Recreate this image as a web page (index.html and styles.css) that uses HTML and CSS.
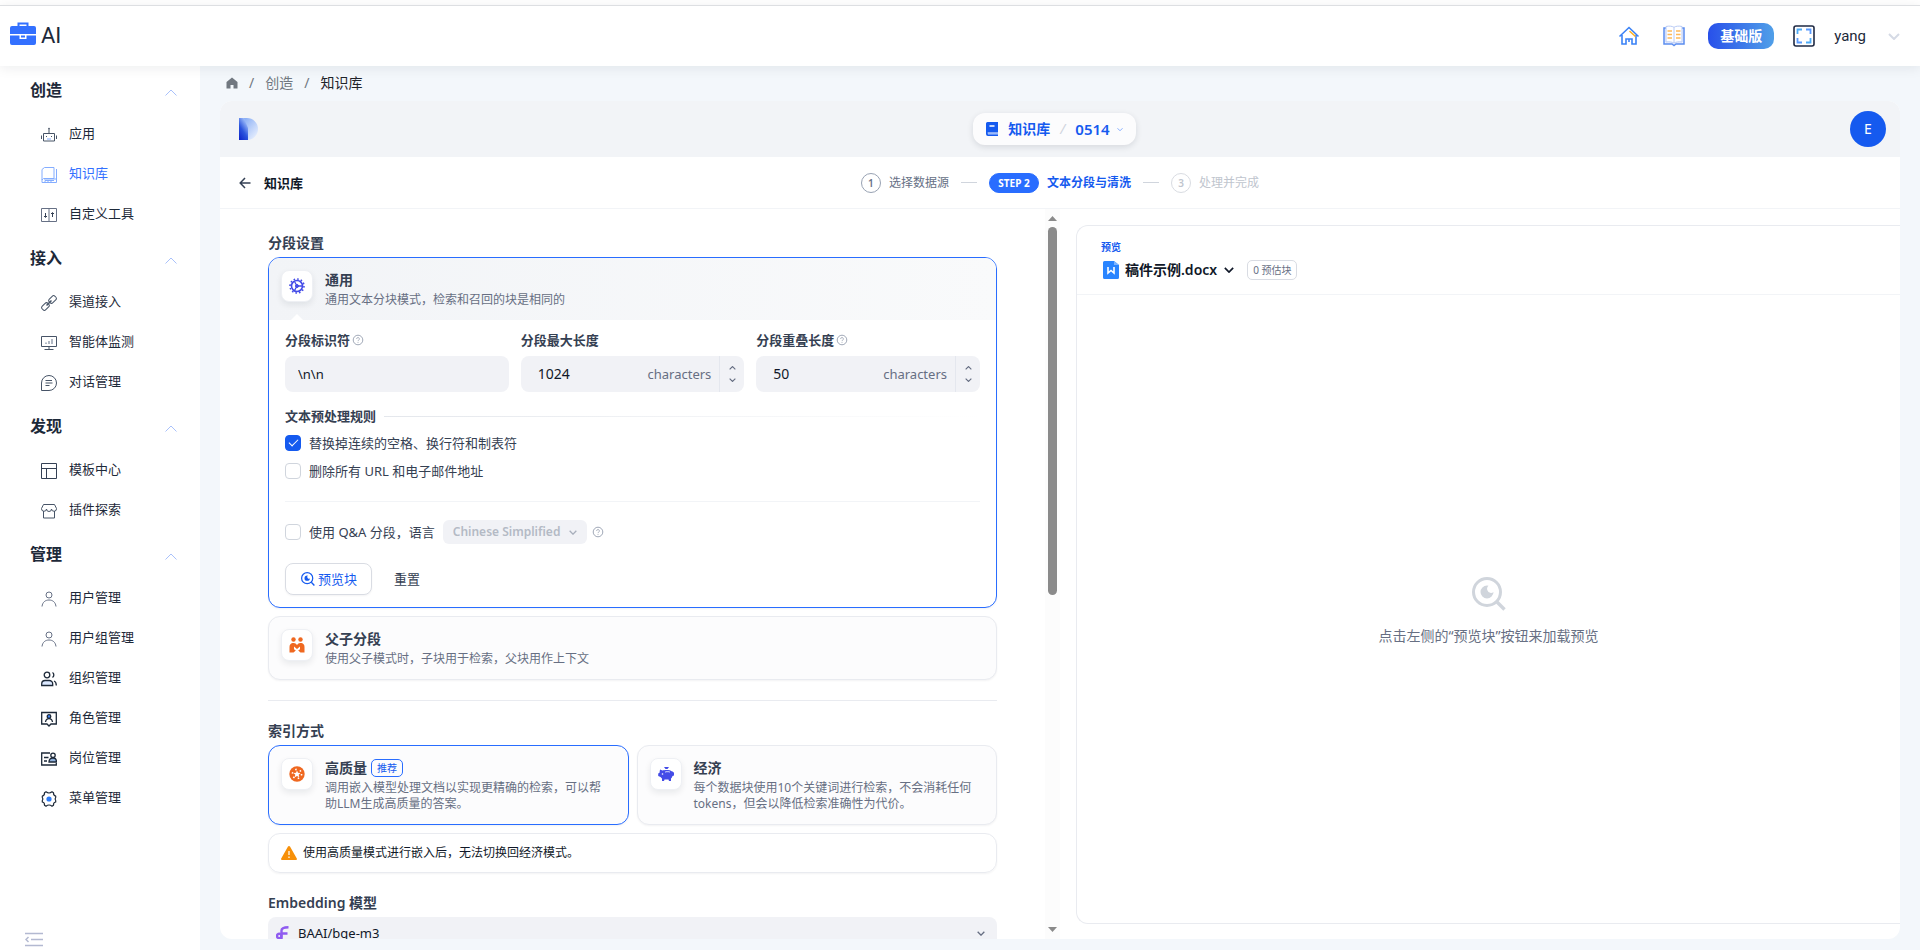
FILE: index.html
```html
<!DOCTYPE html>
<html lang="zh-CN">
  <head>
    <meta charset="utf-8">
    <title>知识库</title>
    <link rel="stylesheet" href="styles.css">
  </head>
  <body>
    <!-- 公用图标 -->
    <svg class="sprite">
      <symbol id="up" viewBox="0 0 12 7"><path d="M.5 6.500 6 1l5.500 5.500" fill="none" stroke="currentColor"/></symbol>
      <symbol id="down" viewBox="0 0 12 7"><path d="M1 1l5 5 5-5" fill="none" stroke="currentColor" stroke-width="2"/></symbol>
      <symbol id="help" viewBox="0 0 12 12"><circle cx="6" cy="6" r="4.800" fill="none" stroke="currentColor"/><path d="M4.600 4.900a1.400 1.400 0 1 1 2 1.300c-.4.200-.6.400-.6.800M6 7.900v.9" fill="none" stroke="currentColor" stroke-width=".9"/></symbol>
      <symbol id="user" viewBox="0 0 16 16"><g fill="none" stroke="currentColor"><circle cx="8" cy="4" r="3"/><path d="M1 15.500C1.500 11 4.500 9 8 9s6.500 2 7 6.500"/></g></symbol>
      <symbol id="preview" viewBox="0 0 34 34"><circle cx="15" cy="15" r="13.500" fill="none" stroke="currentColor" stroke-width="3"/><path d="M25 25l7.500 7.500" stroke="currentColor" stroke-width="3.400"/><path d="M15 8.500a6.500 6.500 0 1 0 6.500 6.500 3.800 3.800 0 0 1-6-1.500A4.200 4.200 0 0 1 16.500 8.700z" fill="currentColor"/></symbol>
    </svg>

    <!-- 顶栏 -->
    <header class="topbar">
      <a class="brand" href="#">
        <svg width="26" height="24" viewBox="0 0 26 24"><path d="M8.500 5V1.500h9V5" fill="none" stroke="#3370ff" stroke-width="2"/><path d="M2 4h22a2 2 0 0 1 2 2v6H0V6a2 2 0 0 1 2-2zM0 13.500h9.500V17h7v-3.500H26V21a2 2 0 0 1-2 2H2a2 2 0 0 1-2-2z" fill="#3370ff"/><path d="M11 13.500h4v2h-4z" fill="#3370ff"/></svg>
        <span>AI</span>
      </a>
      <nav class="tools">
        <a href="#"><svg width="22" height="22" viewBox="0 0 22 22" fill="none" stroke-width="1.600"><path d="M1.500 11.500 11 2.500l9.500 9M4 10v9h4v-5h6v5h4v-9" stroke="#3b82f6"/><path d="M11 14v3" stroke="#3b82f6"/><path d="M11.500 6l6 5.500" stroke="#fdb022"/></svg></a>
        <a href="#"><svg width="22" height="22" viewBox="0 0 22 22" fill="none"><path d="M1 3h20v16h-8l-2 1.500L9 19H1z" fill="#eef2ff" stroke="#5b8def" stroke-width="1.500"/><path d="M3 1.500c3-.7 6-.5 8 .8 2-1.300 5-1.500 8-.8V17c-3-.5-6 0-8 1-2-1-5-1.500-8-1z" fill="#fff" stroke="#b8caf5"/><path d="M11 2.500V18" stroke="#b8caf5"/><path d="M4.500 6h4.500M4.500 9.500h4.500M4.500 13h4.500M13 6h4.500M13 9.500h4.500M13 13h4.500" stroke="#fdb95a" stroke-width="1.400"/></svg></a>
        <button class="plan">基础版</button>
        <button class="bare"><svg width="22" height="22" viewBox="0 0 22 22" fill="none"><rect x="1" y="1" width="20" height="20" rx="2" stroke="#1f2a44" stroke-width="1.600"/><path d="M4.500 9V4.500H9M17.500 13v4.500H13" stroke="#4dabf7" stroke-width="1.800"/><path d="M13 4.500h4.500V9M9 17.500H4.500V13" stroke="#5b9bff" stroke-width="1.800"/></svg></button>
        <button class="account">yang <svg width="12" height="7"><use href="#down"/></svg></button>
      </nav>
    </header>

    <div class="layout">
      <!-- 侧边菜单 -->
      <aside class="sidebar">
        <nav>
          <h2>创造 <svg width="12" height="7"><use href="#up"/></svg></h2>
          <a href="#"><svg viewBox="0 0 16 16"><path d="M2.500 6.500h11v7.500h-11zM8 6V2M.5 8.500v3.500M15.500 8.500v3.500M5.500 9v1M10.500 9v1" stroke="#475467"/><path d="M6 12h4" stroke="#84adff"/><circle cx="8" cy="1.500" r=".8" fill="#344054"/></svg>应用</a>
          <a href="#" class="active"><svg viewBox="0 0 16 16" stroke="#84adff"><path d="M3.500.5H13v11H2.500L1 13V2.500zM3 12h12.500V2M1 12.500v3h14.500V12M4 13.500h9M4 15.500v-2M7 15.500v-2M10 15.500v-2"/></svg>知识库</a>
          <a href="#"><svg viewBox="0 0 16 16" stroke="#667085"><path d="M.5 1.500h15v13H.5zM8 1.500v13"/><path d="M4.500 6v4M3 9l1.500 1.500L6 9M11.500 10V6M10 7l1.500-1.500L13 7" stroke="#344054"/></svg>自定义工具</a>

          <h2>接入 <svg width="12" height="7"><use href="#up"/></svg></h2>
          <a href="#"><svg viewBox="0 0 16 16" stroke="#475467"><g transform="rotate(-45 8 8)"><rect x="-1" y="5.500" width="8" height="5" rx="2"/><rect x="9" y="5.500" width="8" height="5" rx="2"/><path d="M4.500 8h7" stroke-width="1.500"/></g></svg>渠道接入</a>
          <a href="#"><svg viewBox="0 0 16 16" stroke="#475467"><path d="M.5 1.500h15v10H.5zM8 11.500v3M3.500 14.500h9"/><path d="M5 9V7.500M8 9V6M11 9V4" stroke="#98a2b3" stroke-width="1.500"/></svg>智能体监测</a>
          <a href="#"><svg viewBox="0 0 16 16" stroke="#475467"><path d="M.5 15.500V8A7.500 7.500 0 1 1 8 15.500zM4.500 5.500h6.500M4.500 8h7M4.500 10.500h4"/></svg>对话管理</a>

          <h2>发现 <svg width="12" height="7"><use href="#up"/></svg></h2>
          <a href="#"><svg viewBox="0 0 16 16" stroke="#344054"><path d="M.5.5h15v15H.5zM.5 5.500h15M5.500 5.500v10"/></svg>模板中心</a>
          <a href="#"><svg viewBox="0 0 16 16" stroke="#475467"><path d="M2.500 1.500h11l2 4a2.400 2.400 0 0 1-5 .5 2.400 2.400 0 0 1-5 0 2.400 2.400 0 0 1-5-.5zM2.500 8v7h11V8"/></svg>插件探索</a>

          <h2>管理 <svg width="12" height="7"><use href="#up"/></svg></h2>
          <a href="#"><svg><use href="#user"/></svg>用户管理</a>
          <a href="#"><svg><use href="#user"/></svg>用户组管理</a>
          <a href="#"><svg viewBox="0 0 16 16" stroke="#1d2939" stroke-width="1.300"><circle cx="6" cy="4" r="2.800"/><path d="M.7 14.500v-1.500c0-2 1.500-3.500 3.500-3.500h4c2 0 3.500 1.500 3.500 3.500v1.500z" fill="#dbe8ff"/><path d="M11.500 1.500a3 3 0 0 1 0 5M13 10c1.500.5 2.300 2 2.300 4.500"/></svg>组织管理</a>
          <a href="#"><svg viewBox="0 0 16 16" stroke="#1d2939" stroke-width="1.300"><path d="M.7 1.500h14.600v11.500H10l-2 2-2-2H.7z"/><circle cx="8" cy="5.500" r="1.800" fill="#3b82f6"/><path d="M4.500 11c.3-2 1.500-3.300 3.500-3.300s3.200 1.300 3.500 3.300"/></svg>角色管理</a>
          <a href="#"><svg viewBox="0 0 16 16" stroke="#1d2939" stroke-width="1.300"><path d="M9 2H.7v12h14.600v-2M3 6.500h4.500M3 10h3"/><circle cx="12" cy="4.300" r="2.200"/><path d="M8 11c0-2.500 1.500-4 4-4s3.500 1.500 3.500 4z" fill="#8fb0dc"/></svg>岗位管理</a>
          <a href="#"><svg viewBox="0 0 16 16" stroke="#1d2939" stroke-width="1.200"><path d="M5 .8Q8 3.200 11 .8l1.500 1q-.3 2.700 2.200 3.200v1.500Q13.500 8 14.700 9.500V11q-2.500.5-2.200 3.200l-1.500 1q-3-2.400-6 0l-1.500-1Q3.800 11.500 1.300 11V9.500Q2.500 8 1.300 6.500V5q2.500-.5 2.200-3.200z" stroke-linejoin="round"/><circle cx="8" cy="8" r="2.600" fill="#2e7cf6" stroke="none"/></svg>菜单管理</a>
        </nav>
        <button class="bare collapse"><svg width="18" height="16" viewBox="0 0 18 16" fill="none" stroke="#b3b9d1" stroke-width="1.500"><path d="M0 1.500h18M6 7.500h12M0 13.500h18M3.500 5 1 7.500 3.500 10"/></svg></button>
      </aside>

      <main class="main">
        <!-- 面包屑 -->
        <nav class="crumbs">
          <svg width="12" height="12" viewBox="0 0 12 12"><path d="M6 .5 11.500 5v6.500H7.500V8h-3v3.500H.5V5z" fill="#717880"/></svg>
          <span>/</span>
          <a href="#">创造</a>
          <span>/</span>
          <strong>知识库</strong>
        </nav>

        <div class="app">
          <div class="appbar">
            <svg width="20" height="24" viewBox="0 0 20 24"><defs><linearGradient id="dl" x1="0" y1="1" x2=".6" y2="0"><stop offset="0" stop-color="#0a20c8"/><stop offset=".5" stop-color="#2c55dd"/><stop offset="1" stop-color="#a4c3fb"/></linearGradient><linearGradient id="dr" x1="0" y1="0" x2="1" y2="1"><stop offset="0" stop-color="#78a2f3"/><stop offset="1" stop-color="#f3f7ff"/></linearGradient></defs><path d="M0 1h8a11 11 0 0 1 0 22H0z" fill="url(#dr)"/><path d="M0 1h5l4 10v12H0z" fill="url(#dl)"/></svg>
            <div class="switcher">
              <svg width="12" height="14" viewBox="0 0 12 14"><path d="M1.500 0H12v10.500H2c-.7 0-.7 1 0 1H12V14H2a2 2 0 0 1-2-2V1.500A1.500 1.500 0 0 1 1.500 0z" fill="#155aef"/><path d="M3.500 4h5" stroke="#fff" stroke-width="1.400"/><path d="M2 12h10" stroke="#b2caff"/></svg>
              <a href="#">知识库</a>
              <i>/</i>
              <button class="bare">0514 <svg width="6" height="5" viewBox="0 0 12 8"><use href="#down"/></svg></button>
            </div>
            <button class="avatar">E</button>
          </div>

          <div class="stepbar">
            <a class="back" href="#"><svg width="12" height="12" viewBox="0 0 12 12"><path d="M11.500 6H1.500M6 1 1.200 6 6 11" fill="none" stroke="#344054" stroke-width="1.500"/></svg>知识库</a>
            <ol class="steps">
              <li><b>1</b>选择数据源</li>
              <li class="current"><b>STEP 2</b>文本分段与清洗</li>
              <li class="todo"><b>3</b>处理并完成</li>
            </ol>
          </div>

          <div class="panes">
            <section class="settings">
              <form class="form">
                <h3>分段设置</h3>

                <!-- 通用分段 -->
                <div class="card open">
                  <div class="card-head">
                    <span class="tile"><svg width="16" height="16" viewBox="0 0 16 16" fill="none" stroke="#444ce7"><circle cx="8" cy="8" r="5.500" stroke-width="1.600"/><circle cx="8" cy="8" r="7" stroke-width="1.600" stroke-dasharray="1.600 2.060"/><path d="M8 8h5.500M8 8 5.500 3.500M8 8l-2.500 4.500" stroke-width="1.300"/><circle cx="8" cy="8" r="1.500" fill="#444ce7"/></svg></span>
                    <div>
                      <h4>通用</h4>
                      <p>通用文本分块模式，检索和召回的块是相同的</p>
                    </div>
                  </div>
                  <div class="card-body">
                    <div class="fields">
                      <div>
                        <label for="separator">分段标识符 <svg class="help"><use href="#help"/></svg></label>
                        <div class="field"><input id="separator" type="text" value="\n\n"></div>
                      </div>
                      <div>
                        <label for="max">分段最大长度</label>
                        <div class="field number">
                          <input id="max" type="number" value="1024">
                          <span>characters</span>
                          <div class="spin"><button type="button"><svg class="flip"><use href="#down"/></svg></button><button type="button"><svg><use href="#down"/></svg></button></div>
                        </div>
                      </div>
                      <div>
                        <label for="overlap">分段重叠长度<svg class="help"><use href="#help"/></svg></label>
                        <div class="field number">
                          <input id="overlap" type="number" value="50">
                          <span>characters</span>
                          <div class="spin"><button type="button"><svg class="flip"><use href="#down"/></svg></button><button type="button"><svg><use href="#down"/></svg></button></div>
                        </div>
                      </div>
                    </div>

                    <div class="rules-title">文本预处理规则</div>
                    <label class="check"><input type="checkbox" checked>替换掉连续的空格、换行符和制表符</label>
                    <label class="check"><input type="checkbox">删除所有 URL 和电子邮件地址</label>
                    <hr>
                    <div class="qa">
                      <label class="check"><input type="checkbox">使用 Q&amp;A 分段，语言</label>
                      <div class="select small">
                        <select disabled aria-label="语言"><option>Chinese Simplified</option></select>
                        <svg width="8" height="5"><use href="#down"/></svg>
                      </div>
                      <svg class="help"><use href="#help"/></svg>
                    </div>
                    <div class="actions">
                      <button type="button" class="preview-btn"><svg width="14" height="14"><use href="#preview"/></svg>预览块</button>
                      <button type="reset" class="bare">重置</button>
                    </div>
                  </div>
                </div>

                <!-- 父子分段 -->
                <div class="card">
                  <div class="card-head">
                    <span class="tile"><svg width="16" height="16" viewBox="0 0 16 16" fill="#ef6820"><circle cx="4.500" cy="2.500" r="2.200"/><circle cx="11.500" cy="2.500" r="2.200"/><path d="M.5 15.500V10a4 4 0 0 1 7.500-2 4 4 0 0 1 7.500 2v5.500h-4L8 12.500l-3.500 3z"/><path d="M5 9.500 8 12l3-2.500v2.700L8 14.500l-3-2.300z" fill="#fff"/></svg></span>
                    <div>
                      <h4>父子分段</h4>
                      <p>使用父子模式时，子块用于检索，父块用作上下文</p>
                    </div>
                  </div>
                </div>

                <hr class="split">

                <!-- 索引方式 -->
                <h3>索引方式</h3>
                <div class="methods">
                  <div class="card selected">
                    <div class="card-head">
                      <span class="tile"><svg width="16" height="16" viewBox="0 0 16 16"><circle cx="8" cy="8" r="7.700" fill="#ef6820"/><circle cx="8" cy="8" r="4.600" fill="none" stroke="#fff" stroke-width="1.600" stroke-dasharray="1.500 3.320"/><path d="M8 4.500l1 2.300 2.500.2-1.800 1.700.6 2.500L8 10l-2.300 1.200.6-2.500L4.500 7 7 6.800z" fill="#fff"/></svg></span>
                      <div>
                        <h4>高质量 <em>推荐</em></h4>
                        <p>调用嵌入模型处理文档以实现更精确的检索，可以帮助LLM生成高质量的答案。</p>
                      </div>
                    </div>
                  </div>
                  <div class="card">
                    <div class="card-head">
                      <span class="tile"><svg width="16" height="16" viewBox="0 0 16 16" fill="#444ce7"><path d="M6 1h5L9.500 3h-2zM2 3.500l2.500 1C6 3.800 12 3.300 14 5.500c1 0 1.500.5 2 1.500v2.500l-1.500.5c-.5 1.500-1 2-1.500 2.500V15h-2l-.5-1.500h-4L6 15H4v-2.500L2.500 11 .2 10V7.500l1.300-.7z"/><path d="M7 5.500c2-.6 3.500-.5 5 0v1.300c-1.500-.6-3-.6-5 0z" fill="#b4b9f9"/><circle cx="4.500" cy="8" r=".8" fill="#fff"/></svg></span>
                      <div>
                        <h4>经济</h4>
                        <p>每个数据块使用10个关键词进行检索，不会消耗任何tokens，但会以降低检索准确性为代价。</p>
                      </div>
                    </div>
                  </div>
                </div>
                <div class="notice">
                  <svg width="16" height="14" viewBox="0 0 16 14"><path d="M8 0c.5 0 .8.2 1 .6l6.800 12c.4.700 0 1.400-.8 1.400H1c-.8 0-1.200-.7-.8-1.400L7 .6c.2-.4.500-.6 1-.6z" fill="#f79009"/><path d="M8 5v4M8 10.500V12" stroke="#fff" stroke-width="1.200"/></svg>
                  使用高质量模式进行嵌入后，无法切换回经济模式。
                </div>

                <h3 class="model-title"><label for="model">Embedding 模型</label></h3>
                <div class="select">
                  <svg class="provider" width="13" height="14" viewBox="0 0 13 14" fill="none" stroke="#8f5bf0" stroke-width="2.400"><circle cx="3.200" cy="10" r="2.200"/><path d="M5.500 13V4.500C5.500 2.300 7 1.400 12.500 1.300M5.500 7.500h6"/></svg>
                  <select id="model"><option>BAAI/bge-m3</option></select>
                  <svg width="8" height="5"><use href="#down"/></svg>
                </div>
              </form>
              <div class="scroll">
                <svg width="9" height="5" viewBox="0 0 9 5"><path d="M0 5 4.500 0 9 5z" fill="#8a8a8a"/></svg>
                <div class="track"><div class="thumb"></div></div>
                <svg width="9" height="5" viewBox="0 0 9 5"><path d="M0 0l4.500 5L9 0z" fill="#8a8a8a"/></svg>
              </div>
            </section>

            <!-- 预览 -->
            <section class="preview">
              <header>
                <h5>预览</h5>
                <div class="file">
                  <svg width="16" height="18" viewBox="0 0 16 18"><path d="M1.500 0H11l5 4v12.500a1.500 1.500 0 0 1-1.500 1.500h-13A1.500 1.500 0 0 1 0 16.500v-15A1.500 1.500 0 0 1 1.500 0z" fill="#2a85ff"/><path d="M11 0l5 4h-5z" fill="#7db5ff"/><path d="M5 6v6l3-2.500 3 2.500V6" fill="none" stroke="#fff" stroke-width="1.600"/></svg>
                  <button class="bare">稿件示例.docx <svg width="10" height="6"><use href="#down"/></svg></button>
                  <span class="count">0 预估块</span>
                </div>
              </header>
              <div class="empty">
                <svg width="34" height="34"><use href="#preview"/></svg>
                <p>点击左侧的“预览块”按钮来加载预览</p>
              </div>
            </section>
          </div>
        </div>
      </main>
    </div>
  </body>
</html>
```
FILE: styles.css
```css
* {
  box-sizing: border-box;
}

body {
  margin: 0;
  height: 100vh;
  display: flex;
  flex-direction: column;
  overflow: hidden;
  background: #fff;
  color: #1d2939;
  font-family: "Noto Sans", "Noto Sans CJK SC", sans-serif;
  font-size: 13px;
  line-height: 20px;
}

h2, h3, h4, h5, p, ol {
  margin: 0;
  padding: 0;
}

a {
  color: inherit;
  text-decoration: none;
}

button, input, select {
  font: inherit;
  color: inherit;
}

svg {
  display: block;
  flex: none;
}

.sprite {
  display: none;
}

.bare {
  display: flex;
  align-items: center;
  padding: 0;
  border: 0;
  background: none;
}

/* 顶栏 */
.topbar {
  position: relative;
  z-index: 1;
  flex: none;
  display: flex;
  justify-content: space-between;
  align-items: center;
  height: 61px;
  margin-top: 5px;
  padding: 0 20px 0 10px;
  border-top: 1px solid #dddfe2;
  background: #fff;
  box-shadow: 0 2px 12px rgba(0, 21, 41, 0.08);
}

.brand {
  display: flex;
  align-items: center;
  gap: 5px;
  font-family: Roboto, sans-serif;
  font-size: 22px;
}

.brand svg {
  margin-bottom: 4px;
}

.tools {
  display: flex;
  align-items: center;
  gap: 23px;
}

.plan {
  width: 66px;
  height: 26px;
  padding: 0;
  border: 0;
  border-radius: 10px;
  background: linear-gradient(90deg, #2850ea, #509fe8);
  color: #fff;
  font-size: 14px;
  font-weight: 700;
}

.tools .bare {
  margin-left: -4px;
}

.account {
  display: flex;
  align-items: center;
  gap: 22px;
  margin-left: -4px;
  padding: 0;
  border: 0;
  background: none;
  font-family: Roboto, sans-serif;
  font-size: 15px;
}

.account svg {
  color: #d5dae5;
}

/* 侧边菜单 */
.layout {
  flex: 1;
  display: flex;
  min-height: 0;
}

.sidebar {
  display: flex;
  flex-direction: column;
  justify-content: space-between;
  width: 200px;
}

.sidebar h2 {
  display: flex;
  justify-content: space-between;
  align-items: center;
  height: 48px;
  padding: 0 23px 0 30px;
  font-size: 16px;
  font-weight: 700;
}

.sidebar h2 svg {
  margin-top: 4px;
  color: #a9c1fb;
}

.sidebar a {
  display: flex;
  align-items: center;
  gap: 12px;
  height: 40px;
  padding: 0 0 2px 41px;
}

.sidebar a svg {
  width: 16px;
  height: 16px;
  margin-top: 4px;
  fill: none;
  color: #667085;
}

.sidebar .active {
  color: #3370ff;
}

.collapse {
  margin: 0 0 2px 25px;
}

/* 主区域 */
.main {
  flex: 1;
  display: flex;
  flex-direction: column;
  min-width: 0;
  padding: 0 20px 11px;
  background: #f3f7fb;
}

.crumbs {
  display: flex;
  align-items: center;
  gap: 11px;
  height: 35px;
  padding: 0 0 2px 6px;
  color: #717880;
  font-size: 14px;
}

.crumbs strong {
  color: #1f2329;
  font-weight: 400;
}

.app {
  flex: 1;
  display: flex;
  flex-direction: column;
  min-height: 0;
  border-radius: 12px;
  background: #fff;
  overflow: hidden;
}

.appbar {
  flex: none;
  display: flex;
  justify-content: space-between;
  align-items: center;
  height: 56px;
  padding: 0 14px 0 19px;
  background: #f2f4f7;
}

.switcher {
  display: flex;
  align-items: center;
  gap: 10px;
  height: 32px;
  padding: 0 13px;
  border-radius: 12px;
  background: #fcfcfd;
  box-shadow: 0 2px 6px rgba(16, 24, 40, 0.12);
  color: #155aef;
  font-size: 14px;
  font-weight: 600;
}

.switcher i {
  color: #d0d5dd;
  font-weight: 400;
}

.switcher button {
  gap: 7px;
  font-size: 15px;
}

.switcher button svg {
  color: #84adff;
}

.avatar {
  width: 36px;
  height: 36px;
  padding: 0;
  border: 0;
  border-radius: 50%;
  background: #155aef;
  color: #fff;
  font-size: 14px;
}

.stepbar {
  flex: none;
  display: grid;
  grid-template-columns: 1fr auto 1fr;
  align-items: center;
  height: 52px;
  padding: 0 19px;
  border-bottom: 1px solid #f2f4f7;
}

.back {
  display: flex;
  align-items: center;
  gap: 13px;
  color: #101828;
  font-weight: 600;
}

.steps {
  display: flex;
  align-items: center;
  gap: 12px;
  list-style: none;
  font-size: 12px;
  color: #667085;
}

.steps li {
  display: flex;
  align-items: center;
  gap: 8px;
}

.steps li + li::before {
  content: "";
  width: 16px;
  height: 1px;
  margin-right: 4px;
  background: #d0d5dd;
}

.steps b {
  width: 20px;
  height: 20px;
  border: 1px solid #98a2b3;
  border-radius: 10px;
  font-size: 10px;
  font-weight: 600;
  line-height: 18px;
  text-align: center;
}

.steps .current {
  color: #155aef;
  font-weight: 600;
}

.steps .current b {
  width: 50px;
  border-color: #296dff;
  background: #296dff;
  color: #fff;
  font-weight: 700;
}

.steps .todo {
  color: #c0c5ce;
}

.steps .todo b {
  border-color: #d9dce2;
}

.panes {
  flex: 1;
  display: grid;
  grid-template-columns: repeat(2, minmax(0, 1fr));
  min-height: 0;
}

/* 左侧设置 */
.settings {
  display: flex;
  min-height: 0;
}

.form {
  flex: 1;
  min-width: 0;
  padding: 24px 48px 0;
  overflow: hidden;
}

.form h3 {
  margin-bottom: 4px;
  color: #354052;
  font-size: 14px;
  font-weight: 600;
}

.card {
  margin-bottom: 8px;
  border: 1px solid #e9ebf0;
  border-radius: 12px;
  background: #fcfcfd;
  box-shadow: 0 1px 2px rgba(16, 24, 40, 0.05);
  overflow: hidden;
}

.card.open, .card.selected {
  border-color: #296dff;
}

.card.open {
  background: #fff;
}

.card-head {
  display: flex;
  gap: 12px;
  padding: 12px 18px 12px 12px;
  color: #676f83;
  font-size: 12px;
  line-height: 16px;
}

.card-head h4 {
  display: flex;
  align-items: center;
  gap: 4px;
  margin-bottom: 2px;
  color: #354052;
  font-size: 14px;
  font-weight: 600;
  line-height: 20px;
}

.card-head em {
  padding: 0 5px;
  border: 1px solid #296dff;
  border-radius: 5px;
  color: #155aef;
  font-size: 10px;
  font-style: normal;
  font-weight: 400;
  line-height: 16px;
}

.open .card-head {
  position: relative;
  background: linear-gradient(90deg, #f2f4f7, #f9fafb);
}

/* 指向标题图标的小三角 */
.open .card-head::after {
  content: "";
  position: absolute;
  left: 22px;
  bottom: 0;
  border: 6px solid transparent;
  border-top: 0;
  border-bottom-color: #fff;
}

.tile {
  flex: none;
  display: grid;
  place-items: center;
  width: 32px;
  height: 32px;
  border: 1px solid #eef0f4;
  border-radius: 8px;
  background: #fff;
  box-shadow: 0 3px 6px rgba(16, 24, 40, 0.08);
}

.card-body {
  padding: 10px 16px 12px;
}

.fields {
  display: grid;
  grid-template-columns: repeat(3, minmax(0, 1fr));
  gap: 12px;
}

.fields label {
  display: flex;
  align-items: center;
  gap: 2px;
  margin-bottom: 6px;
  color: #354052;
  font-weight: 600;
}

.help {
  width: 12px;
  height: 12px;
  color: #a0a8b7;
}

.field {
  display: flex;
  align-items: center;
  height: 36px;
  border-radius: 8px;
  background: #f1f2f6;
  color: #676f83;
  overflow: hidden;
}

.field input {
  flex: 1;
  min-width: 0;
  padding: 0 13px;
  border: 0;
  outline: 0;
  background: none;
  color: #101828;
  appearance: textfield;
}

.field.number input {
  padding: 0 17px;
  font-size: 14px;
}

.field input::-webkit-inner-spin-button {
  display: none;
}

.spin {
  display: grid;
  width: 25px;
  height: 36px;
  margin-left: 8px;
  padding: 6px 0;
  border-left: 1px solid #e4e7ee;
}

.spin button {
  display: grid;
  place-items: center;
  padding: 0;
  border: 0;
  background: none;
}

.spin svg {
  width: 7px;
  height: 4px;
}

.spin .flip {
  transform: rotate(180deg);
}

.rules-title {
  display: flex;
  align-items: center;
  gap: 8px;
  margin: 14px 0 5px;
  color: #354052;
  font-weight: 600;
}

.rules-title::after {
  content: "";
  flex: 1;
  height: 1px;
  background: linear-gradient(90deg, #e4e7ec, #fff);
}

.check {
  display: flex;
  align-items: center;
  gap: 8px;
  height: 24px;
  margin-bottom: 4px;
  color: #354052;
}

.check input {
  appearance: none;
  display: grid;
  place-items: center;
  width: 16px;
  height: 16px;
  margin: 0;
  border: 1px solid #d0d5dd;
  border-radius: 4px;
  background: #fff;
}

.check input:checked {
  border-color: #155aef;
  background: #155aef;
}

.check input:checked::after {
  content: "";
  width: 8px;
  height: 4px;
  margin-bottom: 3px;
  border: solid #fff;
  border-width: 0 0 1px 1px;
  transform: rotate(-45deg);
}

.form hr {
  height: 1px;
  margin: 18px 0;
  border: 0;
  background: #f2f4f7;
}

.form .split {
  margin: 20px 0;
  background: #e9ebf0;
}

.qa {
  display: flex;
  align-items: center;
  gap: 5px;
}

.qa .check {
  margin: 0 3px 0 0;
}

.select {
  display: flex;
  align-items: center;
  height: 32px;
  padding: 0 12px 0 8px;
  border-radius: 8px;
  background: #f1f2f6;
  color: #676f83;
}

.select select {
  flex: 1;
  padding: 0;
  border: 0;
  outline: 0;
  background: none;
  color: #101828;
  appearance: none;
}

.provider {
  margin-right: 9px;
}

.select.small {
  gap: 8px;
  height: 24px;
  padding: 0 10px;
  border-radius: 6px;
  color: #a8afbc;
  font-size: 12px;
  font-weight: 600;
}

.select.small select {
  color: #b4bac5;
  opacity: 1;
}

.actions {
  display: flex;
  gap: 22px;
  margin-top: 19px;
  color: #354052;
}

.preview-btn {
  display: flex;
  align-items: center;
  gap: 3px;
  height: 32px;
  padding: 0 14px 0 15px;
  border: 1px solid #d9dce3;
  border-radius: 8px;
  background: #fff;
  box-shadow: 0 1px 2px rgba(16, 24, 40, 0.05);
  color: #155aef;
}

.methods {
  display: grid;
  grid-template-columns: repeat(2, minmax(0, 1fr));
  gap: 8px;
  margin-bottom: 8px;
}

.methods .card {
  min-height: 80px;
  margin: 0;
}

.notice {
  display: flex;
  align-items: center;
  gap: 6px;
  height: 40px;
  padding: 0 12px;
  border: 1px solid #e9ebf0;
  border-radius: 12px;
  box-shadow: 0 1px 2px rgba(16, 24, 40, 0.05);
  color: #101828;
  font-size: 12px;
}

.form .model-title {
  margin-top: 20px;
}

/* 滚动条 */
.scroll {
  display: flex;
  flex-direction: column;
  align-items: center;
  gap: 6px;
  width: 15px;
  padding: 7px 0;
  background: #fcfcfc;
}

.track {
  flex: 1;
}

.thumb {
  width: 9px;
  height: 53%;
  border-radius: 5px;
  background: #8a8a8a;
}

/* 右侧预览 */
.preview {
  display: flex;
  flex-direction: column;
  margin: 16px 0 15px 16px;
  border: solid #e9ebf0;
  border-width: 1px 0 1px 1px;
  border-radius: 12px 0 0 12px;
}

.preview header {
  padding: 13px 24px 10px;
  border-bottom: 1px solid #f2f4f7;
}

.preview h5 {
  margin-bottom: 1px;
  color: #155aef;
  font-size: 10px;
  font-weight: 600;
  line-height: 16px;
}

.file {
  display: flex;
  align-items: center;
  height: 28px;
  padding-left: 2px;
  color: #101828;
  font-size: 14px;
  font-weight: 600;
}

.file button {
  gap: 7px;
  margin: 0 13px 0 6px;
}

.count {
  padding: 0 5px;
  border: 1px solid #d9dce3;
  border-radius: 5px;
  color: #676f83;
  font-size: 10px;
  font-weight: 400;
  line-height: 18px;
}

.empty {
  flex: 1;
  display: flex;
  flex-direction: column;
  align-items: center;
  justify-content: center;
  gap: 15px;
  padding-top: 4px;
  color: #d0d5dc;
}

.empty p {
  color: #676f83;
  font-size: 14px;
}
```
